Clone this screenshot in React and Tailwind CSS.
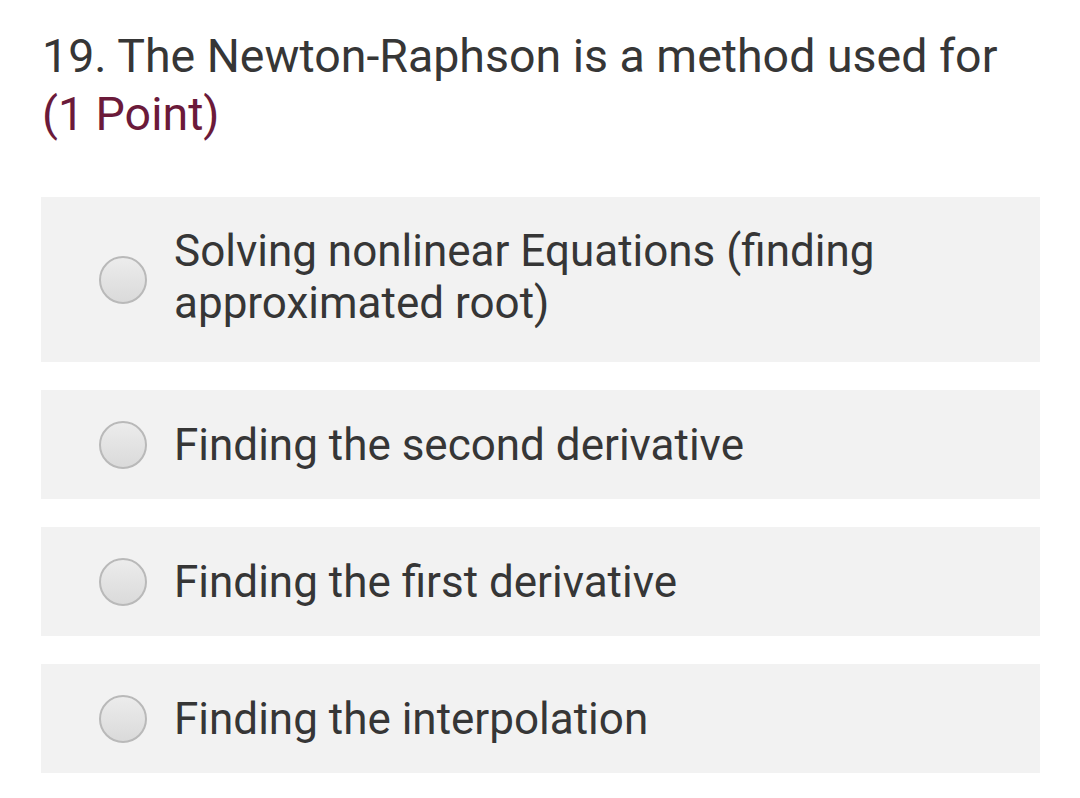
import React from "react";

const options = [
  "Solving nonlinear Equations (finding approximated root)",
  "Finding the second derivative",
  "Finding the first derivative",
  "Finding the interpolation",
];

const Radio = () => (
  <span className="shrink-0 w-[48px] h-[48px] rounded-full border-2 border-[#b9b9b9] bg-gradient-to-b from-[#ececec] to-[#dadada]" />
);

export default function App() {
  return (
    <div className="w-[1080px] h-[798px] bg-white font-['Roboto',sans-serif] text-[#363636] pt-[27px] px-[41px]">
      <h1 className="text-[46.5px] leading-[58px] pl-[1px]">
        19. The Newton-Raphson is a method used for
        <br />
        <span className="text-[#6b1a3a]">(1 Point)</span>
      </h1>
      <div className="mt-[54px] w-[999px] flex flex-col gap-[28px]">
        {options.map((opt, i) => (
          <div
            key={i}
            className={`bg-[#f2f2f2] flex items-center pl-[58px] pr-[100px] ${i === 0 ? "h-[165px]" : "h-[109px]"}`}
          >
            <Radio />
            <span className={`ml-[27px] text-[44px] leading-[52px] ${i === 0 ? "-mt-[5px]" : ""}`}>{opt}</span>
          </div>
        ))}
      </div>
    </div>
  );
}
